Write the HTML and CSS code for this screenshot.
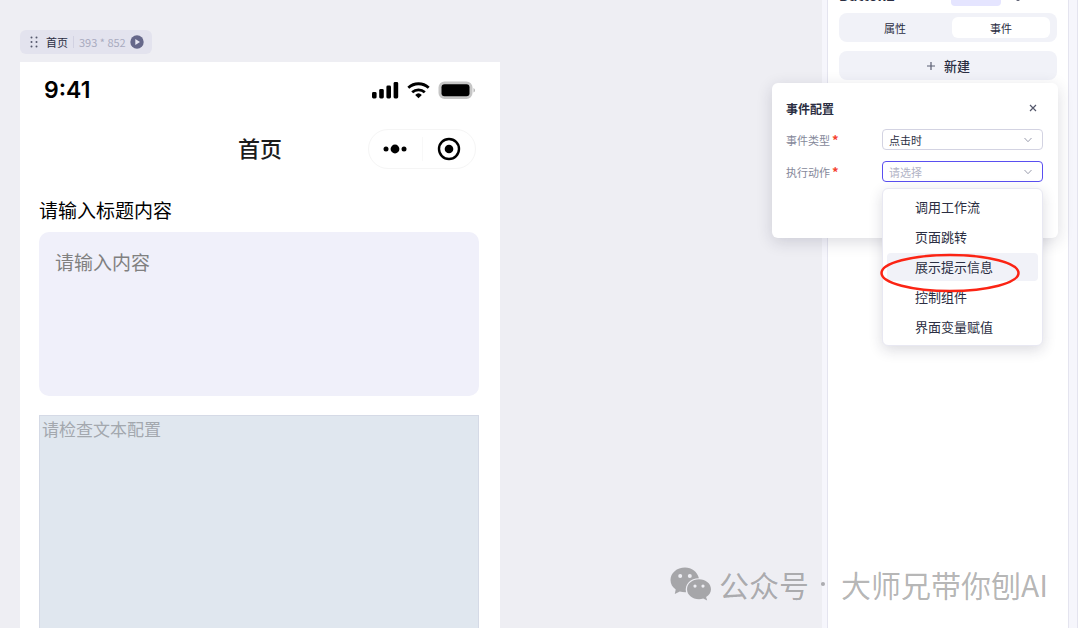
FILE: index.html
```html
<!DOCTYPE html>
<html lang="zh-CN">
  <head>
    <meta charset="UTF-8" />
    <meta name="viewport" content="width=device-width, initial-scale=1.0" />
    <title>首页</title>
    <link rel="stylesheet" href="styles.css">
  </head>
  <body>
    <main class="canvas">
      <div class="page-tag">
        <svg class="drag-icon" viewBox="0 0 8 12" width="8" height="12">
          <circle cx="1.5" cy="1.5" r="1" />
          <circle cx="6.5" cy="1.5" r="1" />
          <circle cx="1.5" cy="6" r="1" />
          <circle cx="6.5" cy="6" r="1" />
          <circle cx="1.5" cy="10.5" r="1" />
          <circle cx="6.5" cy="10.5" r="1" />
        </svg>
        <span class="page-name">首页</span>
        <span class="page-size">393 * 852</span>
        <button class="play-button" aria-label="预览">
          <svg viewBox="0 0 14 14" width="14" height="14">
            <circle cx="7" cy="7" r="6.7" fill="#66688a" />
            <path d="M5.3 4v6l4.7-3z" fill="#e6e6f1" />
          </svg>
        </button>
      </div>

      <section class="phone">
        <header class="status-bar">
          <span class="clock">9:41</span>
          <svg viewBox="0 0 104 18" width="104" height="18">
            <g>
              <rect x="0" y="11" width="4.6" height="6.5" rx="1.4" />
              <rect x="7.200" y="8" width="4.6" height="9.5" rx="1.4" />
              <rect x="14.400" y="4.5" width="4.6" height="13" rx="1.4" />
              <rect x="21.600" y="1" width="4.6" height="16.5" rx="1.4" />
            </g>
            <g fill="none" stroke="#000" stroke-width="2.800">
              <path d="M36.3 6.700a15.2 15.2 0 0 1 20.4 0" />
              <path d="M40.2 11.2a9.4 9.4 0 0 1 12.6 0" />
            </g>
            <path d="M46.5 17.2l-3.3-3.3a4.8 4.8 0 0 1 6.6 0z" />
            <rect x="67.5" y="1.5" width="32" height="15.5" rx="5" fill="#c6c6c6" stroke="#c6c6c6" stroke-width="2" />
            <rect x="69.5" y="3.300" width="28" height="12" rx="3" />
            <path d="M101.5 7v4.6a2.5 2.5 0 0 0 0-4.6z" fill="#b5b5b5" />
          </svg>
        </header>

        <div class="nav-bar">
          <h1 class="nav-title">首页</h1>
          <div class="capsule">
            <button class="capsule-button" aria-label="更多">
              <svg viewBox="0 0 26 24" width="26" height="24">
                <circle cx="4" cy="12" r="2.5" />
                <circle cx="13" cy="12" r="4.4" />
                <circle cx="22" cy="12" r="2.5" />
              </svg>
            </button>
            <button class="capsule-button" aria-label="关闭">
              <svg viewBox="0 0 24 24" width="24" height="24">
                <circle cx="12" cy="12" r="10" fill="none" stroke="#000" stroke-width="2.4" />
                <circle cx="12" cy="12" r="4.3" />
              </svg>
            </button>
          </div>
        </div>

        <div class="phone-body">
          <label class="field-title" for="content">请输入标题内容</label>
          <textarea class="field-input" id="content" placeholder="请输入内容"></textarea>
          <div class="text-block">请检查文本配置</div>
        </div>
      </section>
    </main>

    <aside class="inspector">
      <header class="inspector-header">
        <h2 class="inspector-title">Button2</h2>
        <span class="inspector-badge"></span>
        <svg class="inspector-more" viewBox="0 0 40 22" width="40" height="22">
          <circle cx="9" cy="15" r="2" />
        </svg>
      </header>

      <div class="tabs">
        <button class="tab">属性</button>
        <button class="tab is-active">事件</button>
      </div>

      <button class="add-button">
        <svg viewBox="0 0 10 10" width="10" height="10">
          <path d="M5 1v8M1 5h8" fill="none" stroke="#5b5e72" stroke-width="1.2" />
        </svg>
        新建
      </button>

      <form class="event-popover">
        <div class="popover-header">
          <h3 class="popover-title">事件配置</h3>
          <button class="close-button" type="button" aria-label="关闭">
            <svg viewBox="0 0 8 8" width="8" height="8">
              <path d="M1 1l6 6M7 1l-6 6" fill="none" stroke="#55586c" stroke-width="1.2" />
            </svg>
          </button>
        </div>

        <div class="form-row">
          <label class="form-label" for="type">事件类型<span class="required">*</span></label>
          <div class="select-box">
            <select class="select" id="type">
              <option>点击时</option>
            </select>
            <svg class="select-arrow" viewBox="0 0 8 6" width="8" height="6">
              <path d="M.5 1L4 4.7 7.5 1" />
            </svg>
          </div>
        </div>

        <div class="form-row">
          <label class="form-label" for="action">执行动作<span class="required">*</span></label>
          <div class="select-box">
            <select class="select is-open" id="action">
              <option>请选择</option>
            </select>
            <svg class="select-arrow" viewBox="0 0 8 6" width="8" height="6">
              <path d="M.5 1L4 4.7 7.5 1" />
            </svg>
            <div class="menu">
              <button class="menu-item" type="button">调用工作流</button>
              <button class="menu-item" type="button">页面跳转</button>
              <button class="menu-item is-hover" type="button">展示提示信息</button>
              <button class="menu-item" type="button">控制组件</button>
              <button class="menu-item" type="button">界面变量赋值</button>
              <svg class="marker" viewBox="0 0 140 40" width="140" height="40">
                <ellipse cx="70" cy="20" rx="68.5" ry="18" />
              </svg>
            </div>
          </div>
        </div>
      </form>
    </aside>

    <div class="side-strip"></div>

    <div class="watermark">
      <svg viewBox="0 0 42 34" width="42" height="34">
        <path fill-rule="evenodd" d="M15 .5C6.8.5.5 6 .5 13c0 4 2 7.2 5.2 9.5L4.8 27l5-2.5c1.7.5 3.400.8 5.200.8h1C14.500 17 20.500 11.300 28.900 11.300 27.500 5 21.800.5 15 .5zM10.200 7a2 2 0 1 1 0 4 2 2 0 0 1 0-4zM19.800 7a2 2 0 1 1 0 4 2 2 0 0 1 0-4z" />
        <path fill-rule="evenodd" d="M29 12.200c-6.800 0-12 4.400-12 10s5.200 10 12 10c1.500 0 2.900-.2 4.200-.6l4 2-1.100-3.500c3-1.900 4.900-4.700 4.900-7.900 0-5.600-5.200-10-12-10zM25 17.500a1.600 1.600 0 1 1 0 3.200 1.600 1.600 0 0 1 0-3.200zM33 17.500a1.600 1.600 0 1 1 0 3.200 1.600 1.600 0 0 1 0-3.200z" />
      </svg>
      <span>公众号</span>
      <span class="watermark-dot"></span>
      <span>大师兄带你刨AI</span>
    </div>
  </body>
</html>
```
FILE: styles.css
```css
:root {
  --canvas-bg: #eeeef3;
  --soft-bg: #f1f2f8;
  --strip-bg: #f6f6fc;
  --line: #e4e4ef;
  --text-color: #2b2e42;
  --muted: #85889a;
  --primary: #5a4ff0;
}

*,
*::before,
*::after {
  box-sizing: border-box;
  margin: 0;
  padding: 0;
}

body {
  font-family: "Noto Sans CJK SC", "Noto Sans", sans-serif;
  color: var(--text-color);
  display: flex;
  height: 100vh;
  overflow: hidden;
  position: relative;
}

button,
select,
textarea {
  font: inherit;
  color: inherit;
  border: none;
  background: none;
}

button {
  cursor: pointer;
}

svg {
  display: block;
}

/* canvas */
.canvas {
  flex: 1;
  display: flex;
  flex-direction: column;
  align-items: flex-start;
  gap: 8px;
  padding: 30px 20px 0;
  background-color: var(--canvas-bg);
}

.page-tag {
  display: flex;
  align-items: center;
  height: 24px;
  padding: 0 8px 0 10px;
  border-radius: 6px;
  background-color: #e3e3ee;
  font-size: 11px;
  line-height: 16px;
}

.drag-icon {
  fill: #55586c;
}

.page-name {
  margin-left: 8px;
  padding-right: 5px;
  border-right: 1px solid #d2d2e2;
  line-height: 12px;
}

.page-size {
  margin: 0 4px 0 5px;
  color: #a9abc0;
}

.phone {
  flex: 1;
  display: flex;
  flex-direction: column;
  width: 480px;
  background-color: #fff;
}

.status-bar {
  display: flex;
  align-items: center;
  justify-content: space-between;
  height: 56px;
  padding: 0 24px;
}

.clock {
  font-family: Inter, sans-serif;
  font-size: 23px;
  font-weight: 600;
  color: #000;
}

.nav-bar {
  display: flex;
  align-items: center;
  justify-content: center;
  height: 62px;
  position: relative;
}

.nav-title {
  padding-bottom: 4px;
  font-size: 22px;
  font-weight: 500;
  color: #1c1c1c;
}

.capsule {
  display: flex;
  align-items: center;
  position: absolute;
  right: 24px;
  width: 108px;
  height: 40px;
  border: 1px solid #f5f5f5;
  border-radius: 20px;
}

.capsule-button {
  flex: 1;
  display: flex;
  justify-content: center;
}

.capsule-button + .capsule-button {
  border-left: 1px solid #f8f8f8;
}

.phone-body {
  flex: 1;
  display: flex;
  flex-direction: column;
  padding: 16px 21px 0 19px;
}

.field-title {
  font-size: 19px;
  line-height: 28px;
  color: #000;
}

.field-input {
  height: 164px;
  margin: 8px 0 19px;
  padding: 16px;
  border-radius: 10px;
  background-color: #f0f0fa;
  font-size: 19px;
  line-height: 28px;
  resize: none;
}

.field-input::placeholder {
  color: #808080;
}

.text-block {
  flex: 1;
  padding: 0 2px;
  border: 1px solid #d5dae6;
  border-bottom: none;
  background-color: #e0e7ef;
  font-size: 17px;
  line-height: 26px;
  color: #a3a8ae;
}

/* inspector */
.inspector {
  display: flex;
  flex-direction: column;
  width: 246px;
  padding: 0 11px 0 12px;
  border-left: 5px solid var(--strip-bg);
  position: relative;
  box-shadow: inset 1px 0 var(--line);
}

.inspector-header {
  display: flex;
  align-items: center;
  gap: 8px;
  height: 22px;
  margin-top: -16px;
}

.inspector-title {
  font-size: 14px;
  font-weight: 700;
  flex: 1;
}

.inspector-badge {
  width: 50px;
  height: 22px;
  border-radius: 4px;
  background-color: #e5e5ff;
}

.inspector-more {
  margin-right: 8px;
  fill: #55586c;
}

.tabs {
  display: flex;
  gap: 8px;
  margin-top: 7px;
  padding: 4px 7px;
  border-radius: 8px;
  background-color: var(--soft-bg);
}

.tab {
  flex: 1;
  height: 21px;
  border-radius: 6px;
  font-size: 11px;
  line-height: 20px;
}

.tab.is-active {
  background-color: #fff;
}

.add-button {
  display: flex;
  align-items: center;
  justify-content: center;
  gap: 8px;
  height: 29px;
  margin-top: 9px;
  border-radius: 8px;
  background-color: var(--soft-bg);
  font-size: 13px;
  font-weight: 500;
  line-height: 28px;
}

.event-popover {
  display: flex;
  flex-direction: column;
  gap: 11px;
  position: absolute;
  top: 83px;
  right: 10px;
  width: 286px;
  padding: 15px 15px 56px 14px;
  border-radius: 6px;
  background-color: #fff;
  box-shadow: 0 4px 16px rgba(30, 30, 60, 0.16);
}

.popover-header {
  display: flex;
  align-items: center;
  justify-content: space-between;
  height: 20px;
  padding-right: 6px;
}

.popover-title {
  font-size: 12px;
  font-weight: 700;
}

.form-row {
  display: flex;
  align-items: center;
  justify-content: space-between;
}

.form-label {
  display: flex;
  align-items: center;
  gap: 2px;
  font-size: 11px;
  line-height: 20px;
  color: var(--muted);
}

.required {
  font-size: 13px;
  font-weight: 700;
  color: #f5432f;
}

.select-box {
  width: 161px;
  position: relative;
}

.select {
  display: block;
  appearance: none;
  width: 100%;
  height: 21px;
  padding: 0 6px;
  border: 1px solid #d3d3e2;
  border-radius: 4px;
  background-color: #fff;
  font-size: 11px;
}

.select.is-open {
  border-color: var(--primary);
  color: #b2b4c6;
}

.select-arrow {
  position: absolute;
  top: 8px;
  right: 11px;
  fill: none;
  stroke: #9a9cad;
}

.menu {
  display: flex;
  flex-direction: column;
  gap: 2px;
  position: absolute;
  top: 27px;
  right: 0;
  width: 161px;
  padding: 4px;
  border: 1px solid #e8e8f2;
  border-radius: 6px;
  background-color: #fff;
  box-shadow: 0 4px 14px rgba(30, 30, 60, 0.16);
}

.menu-item {
  height: 28px;
  padding-left: 28px;
  border-radius: 4px;
  font-size: 13px;
  line-height: 28px;
  text-align: left;
}

.menu-item.is-hover {
  background-color: var(--soft-bg);
}

.marker {
  position: absolute;
  top: 64px;
  left: -3px;
  fill: none;
  stroke: #fb2414;
  stroke-width: 2.5;
  pointer-events: none;
}

.side-strip {
  width: 12px;
  border-left: 1px solid var(--line);
  border-right: 2px solid #fff;
  background-color: var(--strip-bg);
  box-shadow: inset -1px 0 var(--line);
}

.watermark {
  display: flex;
  align-items: center;
  position: absolute;
  right: 32px;
  bottom: 22px;
  font-size: 30px;
  line-height: 44px;
  color: rgba(0, 0, 0, 0.3);
  fill: rgba(0, 0, 0, 0.3);
  pointer-events: none;
}

.watermark svg {
  margin-right: 7px;
}

.watermark-dot {
  width: 4px;
  height: 4px;
  margin: 0 16px 0 12px;
  border-radius: 50%;
  background-color: rgba(0, 0, 0, 0.3);
}
```
